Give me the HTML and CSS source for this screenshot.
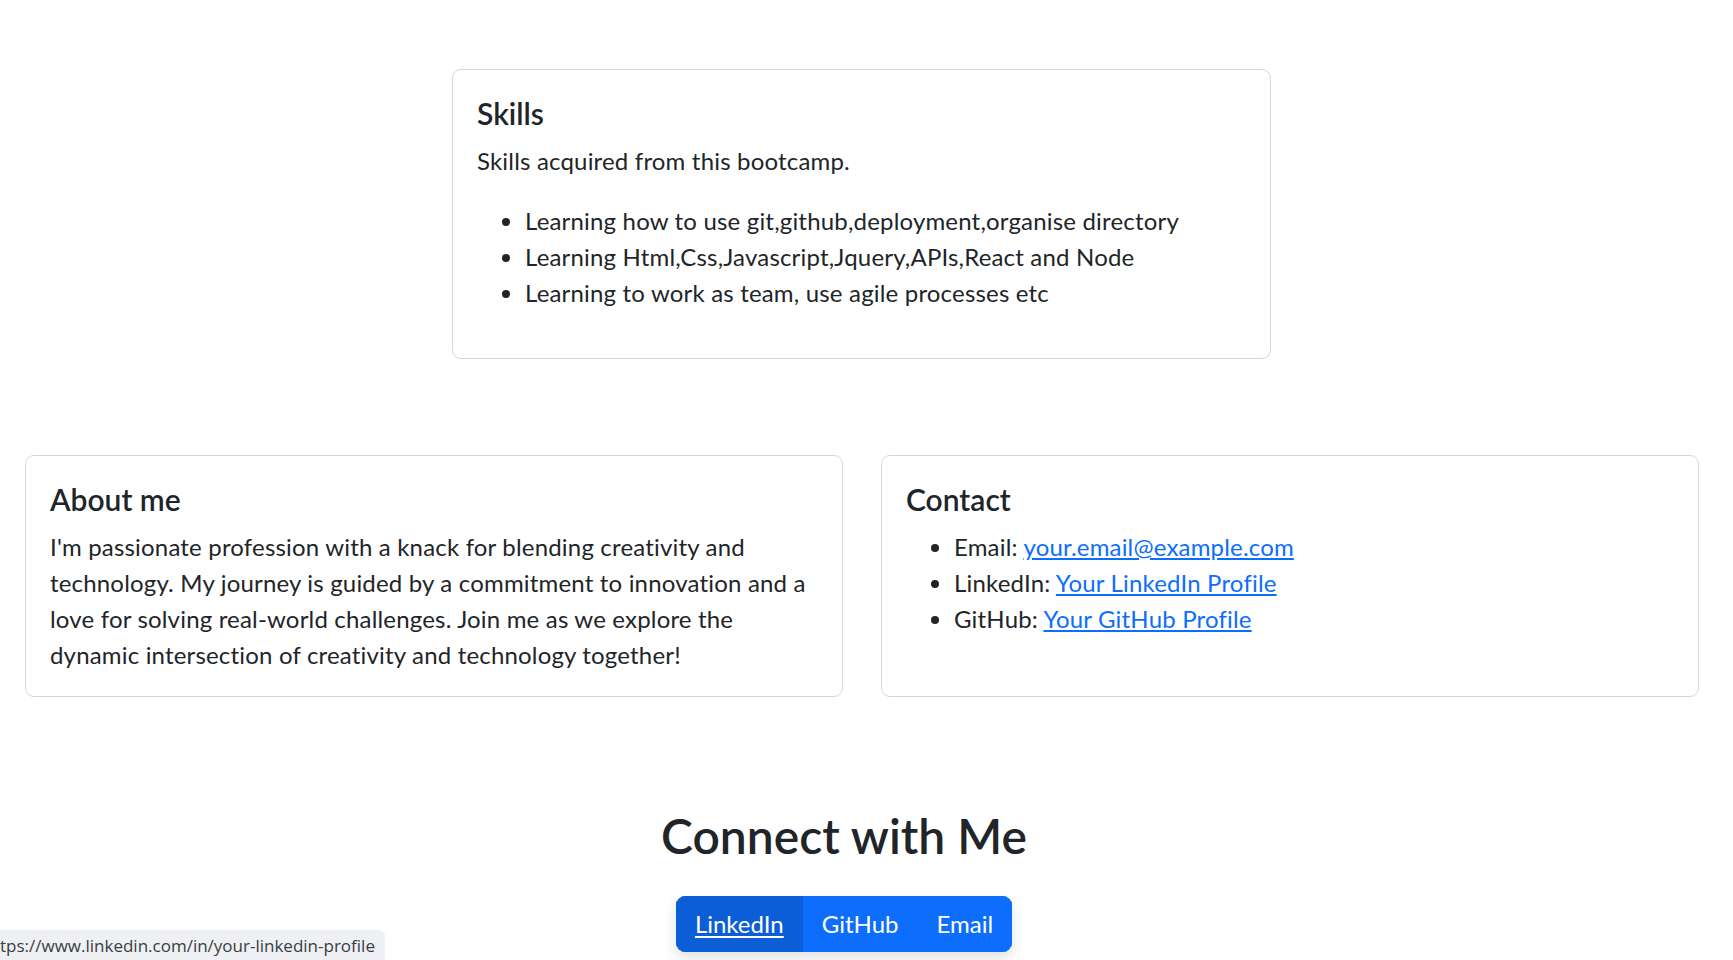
FILE: index.html
```html
<!DOCTYPE html>
<html lang="en">
<head>
<meta charset="utf-8">
<title>Portfolio</title>
<link rel="stylesheet" href="styles.css">
</head>
<body>
  <main class="page">
    <section class="skills-wrap">
      <div class="card skills-card">
        <div class="card-body">
          <h5 class="card-title">Skills</h5>
          <p class="card-text">Skills acquired from this bootcamp.</p>
          <ul class="list">
            <li>Learning how to use git,github,deployment,organise directory</li>
            <li>Learning Html,Css,Javascript,Jquery,APIs,React and Node</li>
            <li>Learning to work as team, use agile processes etc</li>
          </ul>
        </div>
      </div>
    </section>

    <section class="info-row">
      <div class="card">
        <div class="card-body">
          <h5 class="card-title">About me</h5>
          <p class="card-text last">I'm passionate profession with a knack for blending creativity and technology. My journey is guided by a commitment to innovation and a love for solving real-world challenges. Join me as we explore the dynamic intersection of creativity and technology together!</p>
        </div>
      </div>
      <div class="card">
        <div class="card-body">
          <h5 class="card-title">Contact</h5>
          <ul class="list">
            <li>Email: <a href="#">your.email@example.com</a></li>
            <li>LinkedIn: <a href="#">Your LinkedIn Profile</a></li>
            <li>GitHub: <a href="#">Your GitHub Profile</a></li>
          </ul>
        </div>
      </div>
    </section>

    <section class="connect">
      <h2 class="connect-title">Connect with Me</h2>
      <div class="btn-group">
        <a class="btn btn-hover" href="#">LinkedIn</a>
        <a class="btn" href="#">GitHub</a>
        <a class="btn" href="#">Email</a>
      </div>
    </section>
  </main>
  <div class="status-bubble">tps://www.linkedin.com/in/your-linkedin-profile</div>
</body>
</html>
```

FILE: styles.css
```css
* { box-sizing: border-box; }

html, body {
  margin: 0;
  padding: 0;
  background: #fff;
}

body {
  font-family: Lato, "Open Sans", sans-serif;
  font-size: 24px;
  line-height: 36px;
  letter-spacing: 0.18px;
  color: #212529;
  overflow: hidden;
  height: 960px;
}

.page {
  width: 1674px;
  margin-left: 25px;
  padding-top: 69px;
}

.card {
  background: #fff;
  border: 1px solid #d6d7d8;
  border-radius: 9px;
}

.card-body {
  padding: 25px 24px 23px;
}

.card-title {
  margin: 0 0 12px;
  font-size: 30px;
  line-height: 36px;
  font-weight: 600;
  letter-spacing: 0;
}

.card-text {
  margin: 0 0 24px;
}

.card-text.last {
  margin-bottom: 0;
}

.list {
  margin: 0 0 24px;
  padding-left: 48px;
}

a {
  color: #0d6efd;
  text-decoration: underline;
  text-underline-offset: 2px;
}

.skills-wrap {
  display: flex;
  justify-content: center;
  padding-right: 1px;
}

.skills-card {
  width: 819px;
}

.info-row {
  display: grid;
  grid-template-columns: 818px 818px;
  column-gap: 38px;
  margin-top: 96px;
}

.connect {
  width: 1688px;
  margin-left: -25px;
  text-align: center;
  padding-top: 110px;
}

.connect-title {
  margin: 0 0 31px;
  font-size: 48px;
  line-height: 58px;
  font-weight: 600;
  letter-spacing: 0;
}

.btn-group {
  display: inline-flex;
  border-radius: 9px;
  overflow: hidden;
  box-shadow: 0 6px 14px rgba(0, 0, 0, 0.12);
}

.btn {
  display: block;
  padding: 9px 18px;
  font-size: 24px;
  line-height: 36px;
  letter-spacing: 0;
  color: #fff;
  background: #0d6efd;
  border: 1px solid #0d6efd;
  text-decoration: none;
}

.btn-hover {
  background: #0b5ed7;
  border-color: #0b5ed7;
  text-decoration: underline;
  text-underline-offset: 3px;
}

.status-bubble {
  position: fixed;
  left: 0;
  bottom: 0;
  height: 30px;
  padding: 2px 10px 0 0;
  background: #eef0f3;
  border-top-right-radius: 6px;
  font-family: "Open Sans", sans-serif;
  font-size: 17px;
  line-height: 28px;
  letter-spacing: 0;
  color: #3a3d42;
  white-space: nowrap;
}
```
